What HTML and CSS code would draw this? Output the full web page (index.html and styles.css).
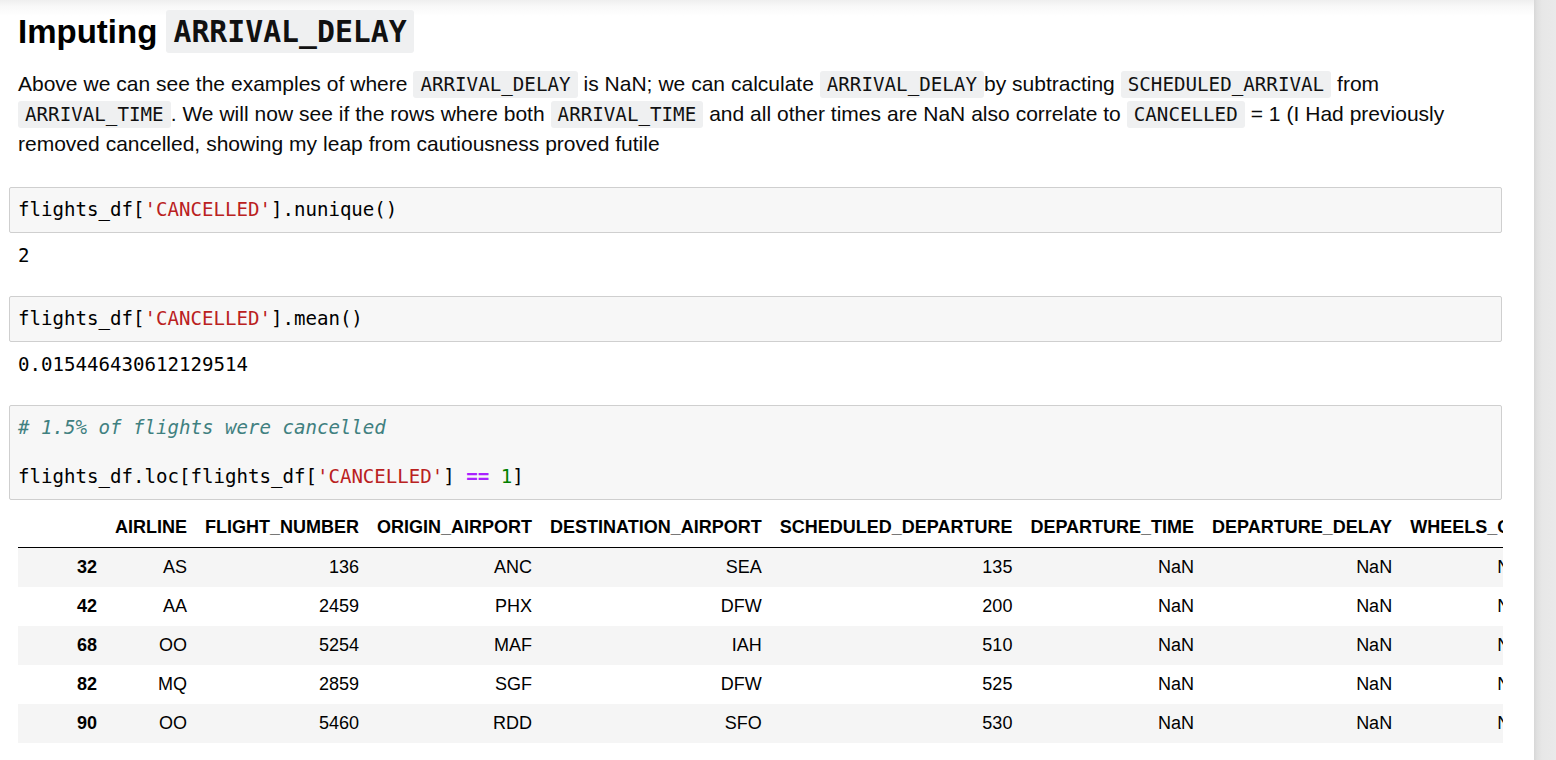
FILE: index.html
```html
<!DOCTYPE html>
<html>
<head>
<meta charset="utf-8">
<link rel="stylesheet" href="styles.css">
</head>
<body>
<div class="page">
  <div class="main">
    <div class="md">
      <h2 class="heading">Imputing <code class="hcode">ARRIVAL_DELAY</code></h2>
      <p class="para">Above we can see the examples of where <code class="icode">ARRIVAL_DELAY</code> is NaN; we can calculate <code class="icode">ARRIVAL_DELAY</code>by subtracting <code class="icode">SCHEDULED_ARRIVAL</code> from <code class="icode">ARRIVAL_TIME</code>. We will now see if the rows where both <code class="icode">ARRIVAL_TIME</code> and all other times are NaN also correlate to <code class="icode">CANCELLED</code> = 1 (I Had previously removed cancelled, showing my leap from cautiousness proved futile</p>
    </div>

    <div class="cell">
      <pre class="code">flights_df[<span class="s">'CANCELLED'</span>].nunique()</pre>
      <pre class="out">2</pre>
    </div>

    <div class="cell">
      <pre class="code">flights_df[<span class="s">'CANCELLED'</span>].mean()</pre>
      <pre class="out">0.015446430612129514</pre>
    </div>

    <div class="cell">
      <pre class="code"><span class="c"># 1.5% of flights were cancelled</span>

flights_df.loc[flights_df[<span class="s">'CANCELLED'</span>] <span class="o">==</span> <span class="n">1</span>]</pre>
      <div class="tablewrap">
        <table class="df">
          <thead>
            <tr>
              <th class="idx"></th>
              <th>AIRLINE</th>
              <th>FLIGHT_NUMBER</th>
              <th>ORIGIN_AIRPORT</th>
              <th>DESTINATION_AIRPORT</th>
              <th>SCHEDULED_DEPARTURE</th>
              <th>DEPARTURE_TIME</th>
              <th>DEPARTURE_DELAY</th>
              <th>WHEELS_OFF</th>
              <th>TAXI_OUT</th>
            </tr>
          </thead>
          <tbody>
            <tr><th class="idx">32</th><td>AS</td><td>136</td><td>ANC</td><td>SEA</td><td>135</td><td>NaN</td><td>NaN</td><td>NaN</td><td>NaN</td></tr>
            <tr><th class="idx">42</th><td>AA</td><td>2459</td><td>PHX</td><td>DFW</td><td>200</td><td>NaN</td><td>NaN</td><td>NaN</td><td>NaN</td></tr>
            <tr><th class="idx">68</th><td>OO</td><td>5254</td><td>MAF</td><td>IAH</td><td>510</td><td>NaN</td><td>NaN</td><td>NaN</td><td>NaN</td></tr>
            <tr><th class="idx">82</th><td>MQ</td><td>2859</td><td>SGF</td><td>DFW</td><td>525</td><td>NaN</td><td>NaN</td><td>NaN</td><td>NaN</td></tr>
            <tr><th class="idx">90</th><td>OO</td><td>5460</td><td>RDD</td><td>SFO</td><td>530</td><td>NaN</td><td>NaN</td><td>NaN</td><td>NaN</td></tr>
          </tbody>
        </table>
      </div>
    </div>
  </div>
  <div class="scrollbar"></div>
</div>
</body>
</html>
```

FILE: styles.css
```css
html, body {
  margin: 0;
  padding: 0;
  background: #fff;
}

.page {
  display: flex;
  height: 760px;
  overflow: hidden;
}

.main {
  flex: 1;
  min-width: 0;
  padding: 0 32px 0 9px;
  background: linear-gradient(to bottom, #efefef 0, #f8f8f8 6px, #ffffff 16px, #ffffff 100%);
  font-family: "Liberation Sans", Arial, sans-serif;
  color: #000;
}

.scrollbar {
  width: 22px;
  flex: none;
  background: linear-gradient(to right, #d7d7d7 0, #e0e0e0 3px, #e7e7e7 8px, #eaeaea 100%);
}

.md {
  padding-left: 9px;
}

.heading {
  margin: 10px 0 0;
  font-size: 33px;
  line-height: 43px;
  font-weight: bold;
  color: #000;
}

.hcode {
  display: inline-block;
  font-family: "DejaVu Sans Mono", monospace;
  font-weight: bold;
  font-size: 29.8px;
  line-height: 37px;
  padding: 3px 7px;
  background: #eff0f1;
  border-radius: 3px;
  vertical-align: top;
  color: #111;
}

.para {
  margin: 16px 0 0;
  font-size: 21px;
  line-height: 30px;
  color: #0a0a0a;
  word-spacing: 0.1px;
}

.icode {
  font-family: "DejaVu Sans Mono", monospace;
  font-size: 19.2px;
  line-height: 20px;
  padding: 2px 7px;
  background: #eff0f1;
  border-radius: 3px;
  color: #111;
}

.cell {
  margin-top: 28px;
}

.code {
  margin: 0;
  background: #f7f7f7;
  border: 1px solid #cfcfcf;
  border-radius: 2px;
  padding: 9.75px 8px;
  font-family: "DejaVu Sans Mono", monospace;
  font-size: 19.1px;
  line-height: 24.5px;
  color: #000;
}

.code .s { color: #ba2121; }
.code .c { color: #408080; font-style: italic; }
.code .o { color: #aa22ff; font-weight: bold; }
.code .n { color: #008000; }

.out {
  margin: 10px 0 0;
  padding-left: 9px;
  font-family: "DejaVu Sans Mono", monospace;
  font-size: 19.1px;
  line-height: 25px;
  color: #000;
}

.tablewrap {
  margin: 8px -1px 0 9px;
  overflow: hidden;
}

.df {
  border-collapse: collapse;
  border-spacing: 0;
  font-family: "Liberation Sans", Arial, sans-serif;
  font-size: 18px;
  color: #000;
  white-space: nowrap;
}

.df th,
.df td {
  text-align: right;
  padding: 9px 9px;
  line-height: 21px;
  border: none;
}

.df .idx {
  min-width: 70px;
}

.df thead th {
  font-weight: bold;
  border-bottom: 1px solid #000;
}

.df tbody th {
  font-weight: bold;
}

.df tbody tr:nth-child(odd) {
  background: #f5f5f5;
}
```
